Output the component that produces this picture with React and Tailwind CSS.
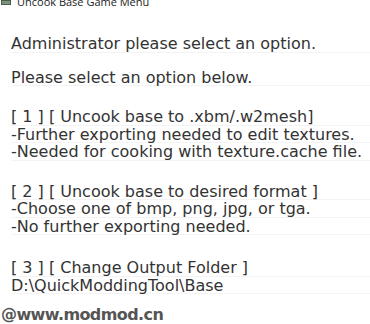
export default function App() {
  const blocks = [
    { gap: 0, lines: ["Administrator please select an option."] },
    { gap: 16, lines: ["Please select an option below."] },
    {
      gap: 22,
      lines: [
        "[ 1 ] [ Uncook base to .xbm/.w2mesh]",
        "-Further exporting needed to edit textures.",
        "-Needed for cooking with texture.cache file.",
      ],
    },
    {
      gap: 22,
      lines: [
        "[ 2 ] [ Uncook base to desired format ]",
        "-Choose one of bmp, png, jpg, or tga.",
        "-No further exporting needed.",
      ],
    },
    {
      gap: 24,
      lines: ["[ 3 ] [ Change Output Folder ]", "D:\\QuickModdingTool\\Base"],
    },
  ];

  return (
    <div className="w-[370px] h-[324px] overflow-hidden bg-white font-['DejaVu_Sans',sans-serif] text-[#333]">
      {/* title bar, mostly cut off */}
      <div className="h-[8px] overflow-hidden flex items-start gap-[6px] pl-[1px]">
        <div className="w-[10px] h-[5px] bg-[#7d927d] border border-[#4a5f4a]" />
        <span className="-mt-[4px] text-[11px] leading-[12px] text-[#222] font-['Open_Sans',sans-serif] whitespace-nowrap">
          Uncook Base Game Menu
        </span>
      </div>

      <div className="pt-[27px] pl-[11px] text-[16px]">
        {blocks.map((b, i) => (
          <div key={i} style={{ marginTop: b.gap }}>
            {b.lines.map((l) => (
              <div
                key={l}
                className="h-[17.5px] leading-[17.5px] whitespace-nowrap border-b border-[#f3f3f3]"
              >
                {l}
              </div>
            ))}
          </div>
        ))}
      </div>

      <div className="mt-[13px] pl-[1px] text-[16px] leading-[16px] font-bold text-[#555] tracking-[-0.6px] whitespace-nowrap">
        @www.modmod.cn
      </div>
    </div>
  );
}
